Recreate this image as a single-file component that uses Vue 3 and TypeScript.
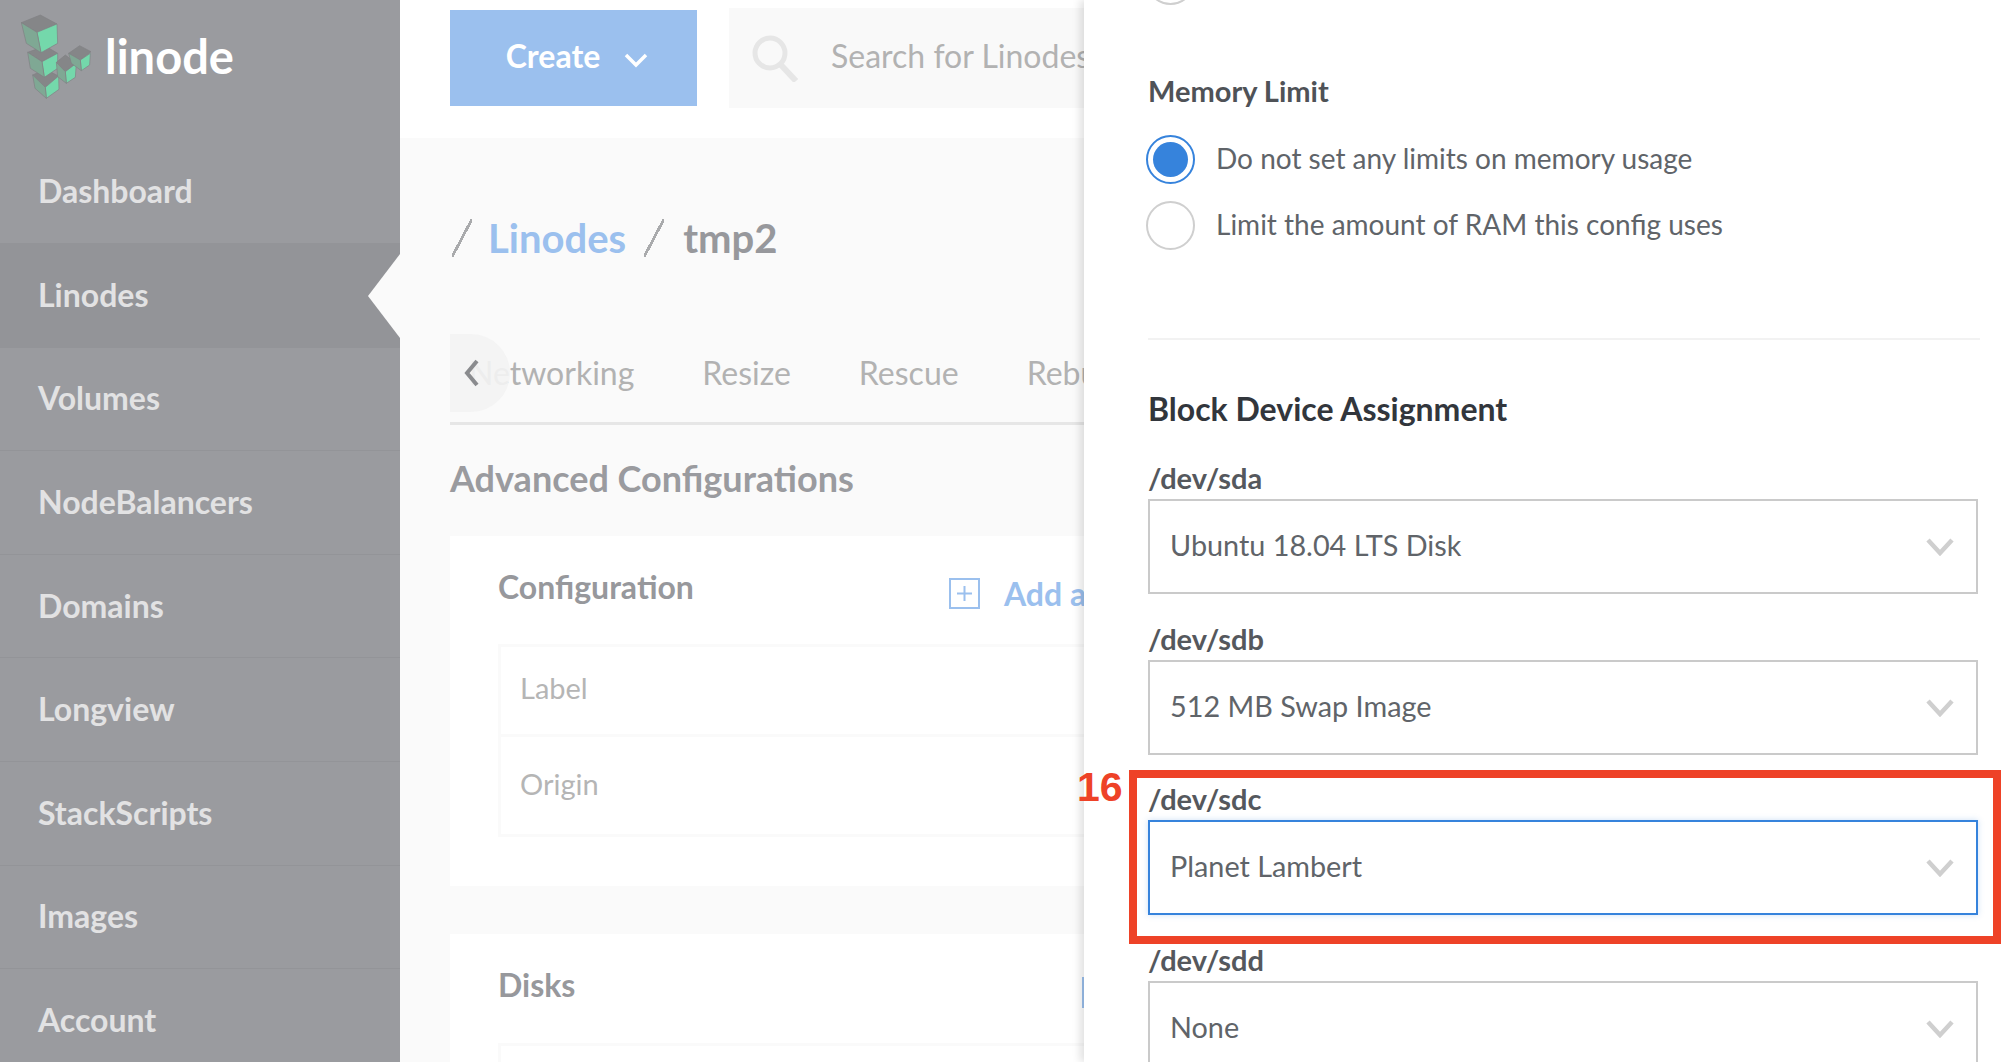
<script setup lang="ts">
const nav: string[] = ['Dashboard', 'Linodes', 'Volumes', 'NodeBalancers', 'Domains', 'Longview', 'StackScripts', 'Images', 'Account']
const tabs: string[] = ['Networking', 'Resize', 'Rescue', 'Rebuild']
const devices = [
  { label: '/dev/sda', value: 'Ubuntu 18.04 LTS Disk', focus: false },
  { label: '/dev/sdb', value: '512 MB Swap Image', focus: false },
  { label: '/dev/sdc', value: 'Planet Lambert', focus: true },
  { label: '/dev/sdd', value: 'None', focus: false },
]
</script>

<template>
  <div class="page">
    <aside class="side">
      <div class="brand">
        <svg class="logo" viewBox="0 0 280 300" width="94" height="100">
          <g stroke="#808184" stroke-width="2" stroke-linejoin="round">
            <path d="M97 225 135 208 175 228 135 262Z" fill="#858688"/>
            <path d="M135 262 175 228 176 268 138 295Z" fill="#74d8ab"/>
            <path d="M97 225 135 262 138 295 104 265Z" fill="#7fa894"/>
            <path d="M82 157 135 138 172 160 125 185Z" fill="#858688"/>
            <path d="M125 185 172 160 172 205 132 232Z" fill="#74d8ab"/>
            <path d="M82 157 125 185 132 232 90 205Z" fill="#7fa894"/>
            <path d="M168 187 195 165 228 190 195 215Z" fill="#858688"/>
            <path d="M195 215 228 190 225 232 198 250Z" fill="#74d8ab"/>
            <path d="M168 187 195 215 198 250 172 230Z" fill="#7fa894"/>
            <path d="M205 160 238 137 272 155 240 180Z" fill="#858688"/>
            <path d="M240 180 270 160 268 195 243 212Z" fill="#74d8ab"/>
            <path d="M205 160 240 180 243 212 213 190Z" fill="#7fa894"/>
            <path d="M63 68 120 45 170 72 110 97Z" fill="#858688"/>
            <path d="M110 97 170 72 172 130 122 158Z" fill="#74d8ab"/>
            <path d="M63 68 110 97 122 158 78 130Z" fill="#7fa894"/>
          </g>
        </svg>
        <span class="word">linode</span>
      </div>
      <nav>
        <div v-for="n in nav" :key="n" class="nav-item" :class="{ active: n === 'Linodes' }">{{ n }}</div>
      </nav>
    </aside>

    <div class="main">
      <header class="top">
        <button class="create">
          <span class="create-text">Create</span>
          <svg width="24" height="16" viewBox="0 0 24 16"><path d="M2 3 12 13 22 3" fill="none" stroke="#fff" stroke-width="3.5"/></svg>
        </button>
        <div class="search">
          <svg width="48" height="48" viewBox="0 0 48 48"><circle cx="18" cy="19" r="15" fill="none" stroke="#e6e6e6" stroke-width="5"/><path d="M29 31 44 47" stroke="#e6e6e6" stroke-width="6" fill="none"/></svg>
          <span class="search-text">Search for Linodes, Volumes, NodeBalancers</span>
        </div>
      </header>

      <section class="content">
        <div class="crumbs">
          <span class="slash"></span>
          <span class="crumb-link">Linodes</span>
          <span class="slash"></span>
          <span class="crumb-now">tmp2</span>
        </div>

        <div class="tabs">
          <span class="back">
            <svg width="16" height="28" viewBox="0 0 16 28"><path d="M13 2 3 14 13 26" fill="none" stroke="#8a8b8e" stroke-width="4"/></svg>
          </span>
          <span v-for="t in tabs" :key="t" class="tab">{{ t }}</span>
        </div>

        <h2 class="section">Advanced Configurations</h2>

        <div class="card">
          <div class="card-head">
            <h3>Configuration</h3>
            <div class="add">
              <svg width="31" height="31" viewBox="0 0 31 31"><rect x="1" y="1" width="29" height="29" fill="none" stroke="#9bc0ee" stroke-width="2"/><path d="M15.500 8v15M8 15.500h15" stroke="#9bc0ee" stroke-width="2"/></svg>
              <span>Add a Configuration</span>
            </div>
          </div>
          <div class="table">
            <div class="row first">Label</div>
            <div class="row second">Origin</div>
          </div>
        </div>

        <div class="card disks">
          <div class="card-head disks-head">
            <h3>Disks</h3>
            <div class="add add-disk">
              <svg width="31" height="31" viewBox="0 0 31 31"><rect x="1" y="1" width="29" height="29" fill="none" stroke="#9bc0ee" stroke-width="2"/></svg>
            </div>
          </div>
          <div class="table disk-table"></div>
        </div>
      </section>
    </div>

    <div class="drawer">
      <span class="radio sliver"></span>
      <h4 class="mem">Memory Limit</h4>
      <label class="opt"><span class="radio on"><i></i></span><span class="opt-text">Do not set any limits on memory usage</span></label>
      <label class="opt"><span class="radio"></span><span class="opt-text">Limit the amount of RAM this config uses</span></label>
      <hr />
      <h3 class="block">Block Device Assignment</h3>
      <div v-for="d in devices" :key="d.label" class="field">
        <div class="flabel">{{ d.label }}</div>
        <div class="select" :class="{ focus: d.focus }">
          <span class="value">{{ d.value }}</span>
          <svg width="28" height="18" viewBox="0 0 28 18"><path d="M2 2 14 15 26 2" fill="none" stroke="#cfcfcf" stroke-width="4.500"/></svg>
        </div>
      </div>
    </div>

    <div class="mark"></div>
    <div class="num">16</div>
  </div>
</template>

<style>
html, body { margin: 0; background: #fff; }
</style>

<style scoped>
.page {
  position: relative;
  width: 2009px;
  height: 1062px;
  display: flex;
  overflow: hidden;
  font-family: Lato, "Liberation Sans", sans-serif;
  background: #fafafa;
}
.side { width: 400px; flex: none; background: #9a9b9f; }
.brand { height: 140.5px; display: flex; align-items: flex-start; }
.logo { flex: none; }
.word {
  margin: 29px 0 0 11px;
  color: #fff;
  font-size: 47px;
  line-height: 54px;
  font-weight: 700;
}
.nav-item {
  height: 103.6px;
  box-sizing: border-box;
  padding: 0 0 2px 38px;
  display: flex;
  align-items: center;
  color: #e2e2e3;
  font-size: 32px;
  font-weight: 700;
  border-bottom: 1px solid #939498;
}
.nav-item.active {
  background: #939498;
  position: relative;
}
.nav-item.active::after {
  content: "";
  position: absolute;
  right: 0;
  top: 10px;
  border-style: solid;
  border-width: 42px 32px 42px 0;
  border-color: transparent #fafafa transparent transparent;
}
.main { flex: 1; min-width: 0; display: flex; flex-direction: column; }
.top {
  height: 138px;
  flex: none;
  background: #fff;
  display: flex;
  align-items: flex-start;
  padding-left: 50px;
  gap: 32px;
}
.create {
  margin-top: 10px;
  width: 247px;
  height: 96px;
  flex: none;
  border: 0;
  background: #9bc0ee;
  color: #fff;
  font: 700 32px Lato, sans-serif;
  display: flex;
  align-items: center;
  justify-content: center;
  gap: 24px;
  padding: 0 0 0 7px;
}
.create-text { margin-top: -5px; }
.create svg { margin-top: 4px; }
.search {
  margin-top: 8px;
  height: 100px;
  width: 700px;
  flex: none;
  background: #f9f9f9;
  display: flex;
  align-items: center;
  padding-left: 23px;
  gap: 31px;
  color: #b2b2b2;
  font-size: 32px;
  white-space: nowrap;
  overflow: hidden;
}
.search-text { margin-top: -5px; }
.content { padding-left: 50px; flex: 1; min-height: 0; }
.crumbs { display: flex; align-items: center; height: 60px; margin-top: 70px; }
.slash {
  width: 20px;
  height: 38px;
  background: linear-gradient(to bottom right, transparent 46%, #a9aaac 46%, #a9aaac 54%, transparent 54%);
  margin-left: 2px;
}
.crumb-link { color: #9bc0ee; font-size: 40px; font-weight: 700; margin: 0 16px 0 16px; }
.crumb-now { color: #97989c; font-size: 40px; font-weight: 700; margin-left: 19px; }
.tabs {
  position: relative;
  height: 84px;
  margin-top: 63px;
  width: 1500px;
  border-bottom: 3px solid #e6e6e6;
  display: flex;
  gap: 68px;
  align-items: center;
  padding: 0 0 7px 19px;
  color: #b2b2b2;
  font-size: 32px;
  white-space: nowrap;
}
.tab { line-height: 40px; margin-top: -1px; }
.back {
  position: absolute;
  left: 0;
  top: 3px;
  width: 60px;
  height: 78px;
  background: rgba(243, 243, 243, 0.9);
  border-radius: 0 40px 40px 0;
  display: flex;
  align-items: center;
  padding-left: 14px;
  box-sizing: border-box;
}
.section {
  margin: 31px 0 0;
  color: #9a9b9f;
  font-size: 36px;
  line-height: 44px;
  font-weight: 700;
}
.card {
  margin-top: 36px;
  width: 1500px;
  height: 350px;
  box-sizing: border-box;
  background: #fff;
  padding: 32px 48px 0;
}
.card h3 { margin: 0; color: #97989c; font-size: 32px; line-height: 38px; font-weight: 700; }
.card-head { display: flex; align-items: flex-start; height: 76px; }
.add {
  display: flex;
  align-items: center;
  gap: 24px;
  margin: 10px 0 0 255px;
  color: #9bc0ee;
  font-size: 32px;
  font-weight: 700;
  line-height: 31px;
  white-space: nowrap;
}
.add-disk { margin: 11px 0 0 507px; }
.table { border: 3px solid #fafafa; color: #b5b5b5; font-size: 29px; }
.row { display: flex; align-items: center; padding: 0 0 6px 19px; box-sizing: border-box; }
.first { height: 90px; border-bottom: 3px solid #fafafa; }
.second { height: 97px; padding-bottom: 4px; }
.disks { margin-top: 48px; padding-top: 32px; height: 300px; }
.disks-head { height: 77px; }
.disk-table { height: 100px; }
.drawer {
  position: absolute;
  left: 1084px;
  top: 0;
  bottom: 0;
  width: 925px;
  box-sizing: border-box;
  padding: 0 29px 0 64px;
  background: #fff;
  box-shadow: -4px 0 8px rgba(0, 0, 0, 0.12);
  overflow: hidden;
}
.radio {
  width: 49px;
  height: 49px;
  box-sizing: border-box;
  flex: none;
  border: 2.5px solid #cfcfcf;
  border-radius: 50%;
  display: flex;
  align-items: center;
  justify-content: center;
  background: #fff;
  margin-left: -2px;
}
.radio.on { border-color: #3683dc; }
.radio.on i { width: 35px; height: 35px; border-radius: 50%; background: #3683dc; display: block; }
.sliver { margin-top: -44px; }
.mem {
  margin: 67px 0 0;
  color: #4f5257;
  font-size: 29px;
  line-height: 38px;
  font-weight: 700;
}
.opt {
  display: flex;
  align-items: center;
  gap: 21px;
  color: #606469;
  font-size: 28px;
  height: 49px;
}
.opt-text { margin-top: -3px; }
.mem + .opt { margin-top: 25px; }
.opt + .opt { margin-top: 17px; }
hr { border: 0; height: 2px; background: #f2f2f2; margin: 88px 0 0; }
.block {
  margin: 49px 0 0;
  color: #32363c;
  font-size: 32px;
  line-height: 40px;
  font-weight: 700;
}
.field { height: 160.5px; box-sizing: border-box; }
.block + .field { margin-top: 32px; }
.flabel { color: #55585d; font-size: 29px; line-height: 34px; height: 38px; font-weight: 700; }
.select {
  height: 95px;
  margin-right: 2px;
  box-sizing: border-box;
  border: 2px solid #cacaca;
  padding: 0 22px 0 20px;
  display: flex;
  align-items: center;
  justify-content: space-between;
  color: #606469;
  font-size: 28.8px;
}
.value { margin-top: -3px; }
.select svg { margin-top: 1px; }
.select.focus { border-color: #3683dc; box-shadow: 0 0 6px rgba(54, 131, 220, 0.25); }
.mark {
  position: absolute;
  left: 1129px;
  top: 770px;
  width: 872px;
  height: 174px;
  box-sizing: border-box;
  border: 8px solid #ee4227;
}
.num {
  position: absolute;
  left: 1077px;
  top: 764px;
  color: #ee4227;
  font: 700 41px/46px "Liberation Sans", sans-serif;
}
</style>
